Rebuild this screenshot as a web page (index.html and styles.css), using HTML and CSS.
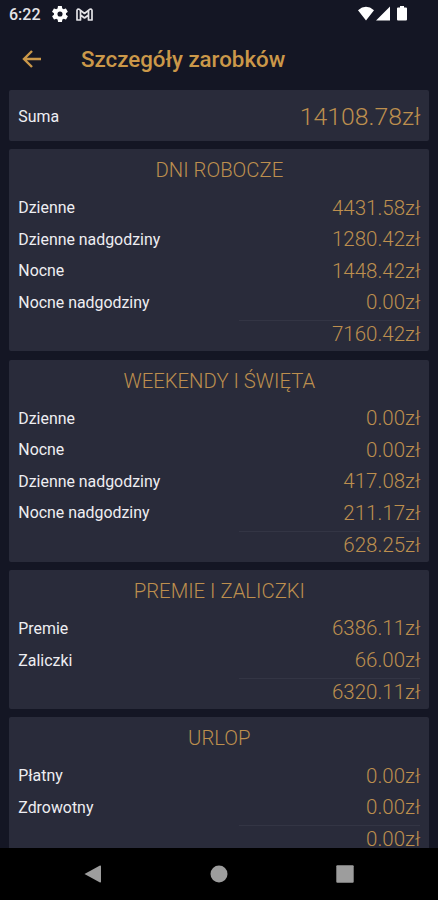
FILE: index.html
```
<!DOCTYPE html>
<html lang="pl">
<head>
    <meta charset="UTF-8">
    <title>Szczegóły zarobków</title>
    <link rel="stylesheet" href="styles.css">
</head>
<body>
<div class="status-bar">
    <span class="clock">6:22</span>
    <svg class="gear" width="16" height="16" viewBox="2 2 20 20">
        <path fill="#fff" fill-rule="evenodd" d="M19.4 13c.1-.3.1-.7.1-1s0-.7-.1-1l2.1-1.600c.2-.2.2-.4.1-.6l-2-3.500c-.1-.2-.4-.3-.6-.2l-2.500 1c-.5-.4-1.100-.7-1.700-1l-.4-2.600c0-.3-.2-.5-.5-.5h-4c-.2 0-.4.2-.5.4l-.4 2.700c-.6.2-1.100.6-1.700 1l-2.500-1c-.2-.1-.5 0-.6.200l-2 3.500c-.1.2-.1.5.1.600L4.500 11c0 .3-.1.7-.1 1s0 .7.1 1l-2.100 1.600c-.2.2-.3.4-.1.6l2 3.500c.1.2.4.3.6.2l2.500-1c.5.4 1.100.7 1.700 1l.4 2.700c.1.2.3.4.5.4h4c.3 0 .5-.2.5-.4l.4-2.700c.6-.2 1.200-.6 1.700-1l2.500 1c.2.1.5 0 .6-.2l2-3.500c.1-.2.1-.5-.1-.6zM12 15.200a3.200 3.200 0 1 1 0-6.400 3.200 3.200 0 0 1 0 6.400z"/>
    </svg>
    <svg class="mail" width="17" height="13" viewBox="0 0 17 13">
        <path fill="none" stroke="#e4e4e8" stroke-width="1.700" stroke-linejoin="round" d="M1 12V2.400Q1.400.7 3 1.200L8.500 5.500 14 1.200Q15.600.7 16 2.400V12H12.500V7L8.500 10 4.500 7V12ZM4.500 2.500V7M12.500 2.500V7"/>
    </svg>
    <svg class="signals" width="52" height="18" viewBox="0 0 52 18">
        <path fill="#fff" d="M1 5.200Q9 -1.600 17 5.200L9 15.500ZM19 15.500L33 1.500V15.500ZM41 2.500H43V1H47V2.500H49Q50 2.500 50 3.500V14.500Q50 15.500 49 15.500H41Q40 15.500 40 14.500V3.500Q40 2.500 41 2.500Z"/>
    </svg>
</div>

<div class="app-bar">
    <svg class="back" width="20" height="18" viewBox="0 0 20 18">
        <path fill="none" stroke="#cb9849" stroke-width="2.400" d="M19 9H3M10 1L2 9L10 17"/>
    </svg>
    <h1>Szczegóły zarobków</h1>
</div>

<div class="content">
    <div class="card sum">
        <span class="label">Suma</span>
        <span class="value">14108.78zł</span>
    </div>

    <div class="card">
        <h2>DNI ROBOCZE</h2>
        <div class="row"><span class="label">Dzienne</span><span class="value">4431.58zł</span></div>
        <div class="row"><span class="label">Dzienne nadgodziny</span><span class="value">1280.42zł</span></div>
        <div class="row"><span class="label">Nocne</span><span class="value">1448.42zł</span></div>
        <div class="row"><span class="label">Nocne nadgodziny</span><span class="value">0.00zł</span></div>
        <div class="total"><span class="value">7160.42zł</span></div>
    </div>

    <div class="card">
        <h2>WEEKENDY I ŚWIĘTA</h2>
        <div class="row"><span class="label">Dzienne</span><span class="value">0.00zł</span></div>
        <div class="row"><span class="label">Nocne</span><span class="value">0.00zł</span></div>
        <div class="row"><span class="label">Dzienne nadgodziny</span><span class="value">417.08zł</span></div>
        <div class="row"><span class="label">Nocne nadgodziny</span><span class="value">211.17zł</span></div>
        <div class="total"><span class="value">628.25zł</span></div>
    </div>

    <div class="card">
        <h2>PREMIE I ZALICZKI</h2>
        <div class="row"><span class="label">Premie</span><span class="value">6386.11zł</span></div>
        <div class="row"><span class="label">Zaliczki</span><span class="value">66.00zł</span></div>
        <div class="total"><span class="value">6320.11zł</span></div>
    </div>

    <div class="card">
        <h2>URLOP</h2>
        <div class="row"><span class="label">Płatny</span><span class="value">0.00zł</span></div>
        <div class="row"><span class="label">Zdrowotny</span><span class="value">0.00zł</span></div>
        <div class="total"><span class="value">0.00zł</span></div>
    </div>
</div>

<div class="nav-bar">
    <svg width="18" height="18" viewBox="0 0 18 18"><path fill="#9d9d9d" d="M.5 9L16 .5Q17 .3 17 1.300V16.700Q17 17.700 16 17.500Z"/></svg>
    <svg width="18" height="18" viewBox="0 0 18 18"><circle cx="9" cy="9" r="8.500" fill="#9d9d9d"/></svg>
    <svg width="18" height="18" viewBox="0 0 18 18"><rect x=".3" y=".3" width="17.400" height="17.400" rx="1" fill="#9d9d9d"/></svg>
</div>
</body>
</html>
```
FILE: styles.css
```
* {
    box-sizing: border-box;
}

body {
    margin: 0;
    height: 900px;
    display: flex;
    flex-direction: column;
    overflow: hidden;
    background: #141624;
    font-family: Roboto, sans-serif;
}

.status-bar {
    height: 30px;
    display: flex;
    align-items: center;
    padding: 0 29px 2px 9px;
    flex-shrink: 0;
}

.clock {
    width: 43px;
    font-size: 16px;
    font-weight: 500;
    color: #e4e4e8;
}

.mail {
    margin-left: 8px;
}

.signals {
    margin-left: auto;
}

.app-bar {
    height: 60px;
    display: flex;
    align-items: center;
    padding: 0 0 3px 22px;
    flex-shrink: 0;
}

h1 {
    margin: 1px 0 0 39px;
    font-size: 22.3px;
    font-weight: 500;
    color: #cb9849;
}

.content {
    flex: 1;
    min-height: 0;
    overflow: hidden;
    display: flex;
    flex-direction: column;
    gap: 8.4px;
    padding: 0 8.600px 0 9.300px;
}

.card {
    flex-shrink: 0;
    padding: 0 9px 1.500px;
    border-radius: 2px;
    background: #292b3a;
}

.sum {
    height: 51px;
    display: flex;
    align-items: center;
    justify-content: space-between;
    padding-top: 3px;
}

h2 {
    margin: 0;
    height: 42.500px;
    line-height: 43px;
    font-size: 20.3px;
    font-weight: 300;
    text-align: center;
    color: #bd8f4e;
}

.row,
.total {
    height: 31.600px;
    display: flex;
    align-items: center;
    justify-content: space-between;
}

/* sum line under the right half of the card */
.total {
    width: 181px;
    height: 29.600px;
    margin: 2px 0 0 auto;
    padding-bottom: 2.500px;
    justify-content: flex-end;
    border-top: 1px solid #333544;
}

.label {
    font-size: 15.9px;
    color: #eeeef2;
}

.value {
    font-size: 20.5px;
    font-weight: 300;
    color: #bd8f4e;
}

.sum .value {
    font-size: 24.8px;
}

.nav-bar {
    height: 52px;
    display: flex;
    align-items: center;
    justify-content: space-between;
    padding: 0 84px;
    flex-shrink: 0;
    background: #000;
}
```
